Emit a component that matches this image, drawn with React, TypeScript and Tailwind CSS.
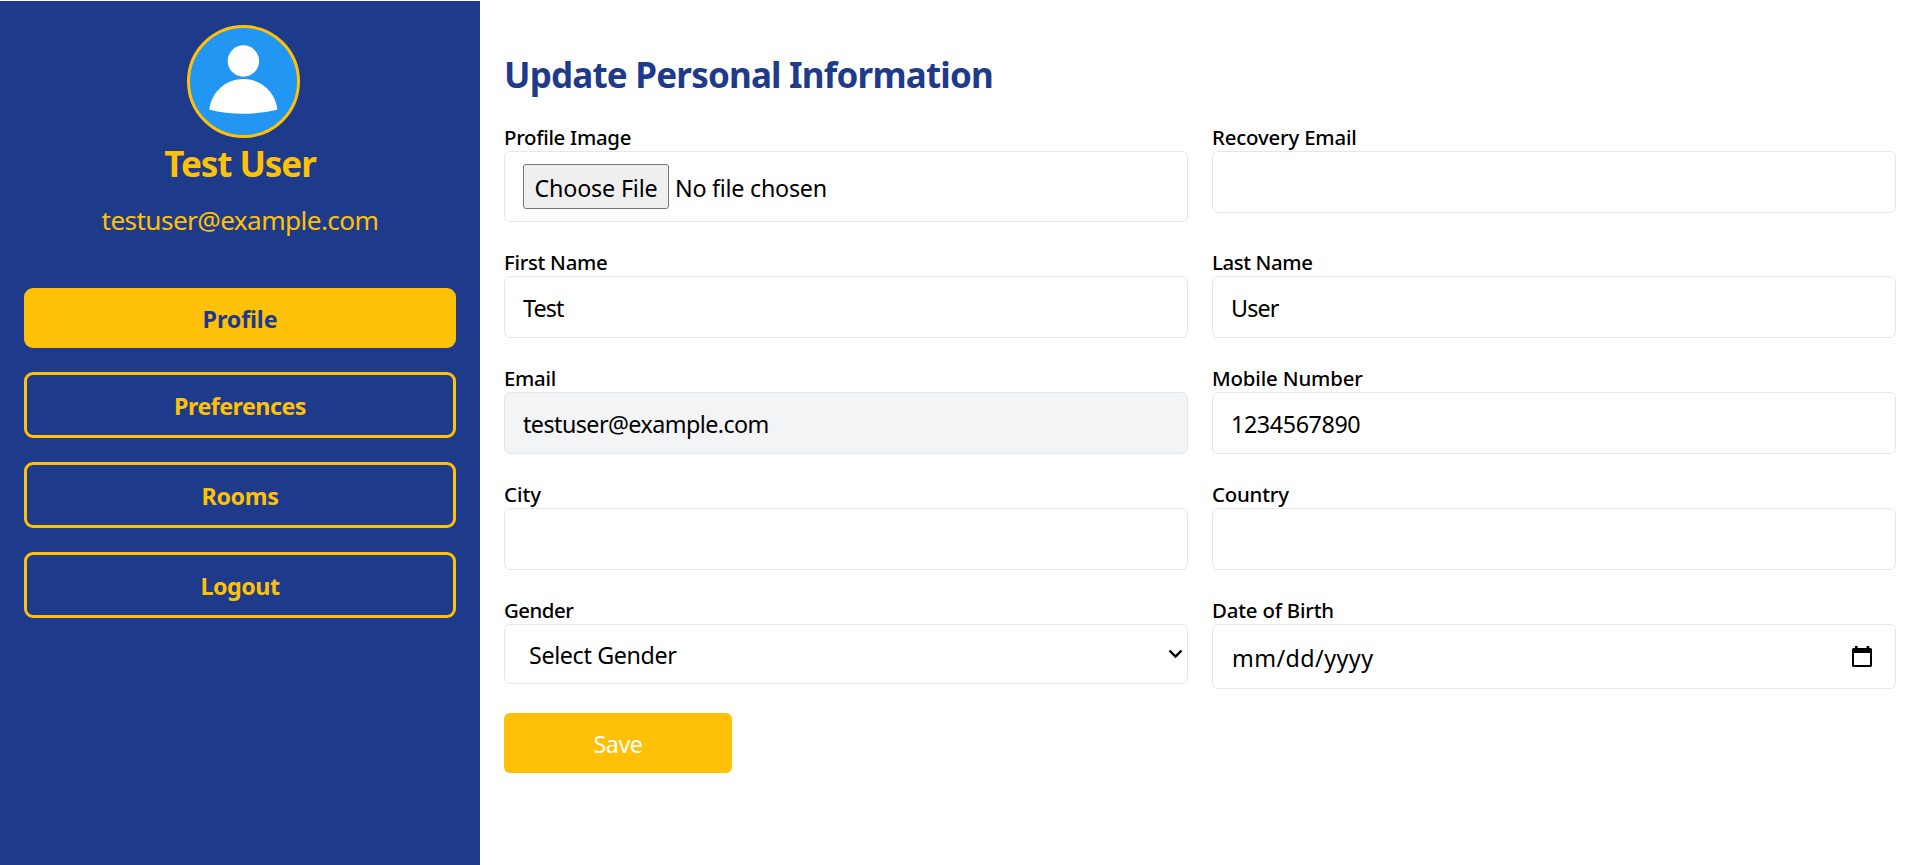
import type { ReactNode } from "react";

const labelBase = "block h-[30px] pt-[2px] text-[20.4px] leading-[28px] font-medium text-black";
const inputBase =
  "block h-[62px] w-full rounded-md border border-gray-200 px-[18px] pt-[2px] text-[23.3px] text-black outline-none";

function Field({ label, spacing, children }: { label: string; spacing: string; children: ReactNode }) {
  return (
    <label className="block">
      <span className={`${labelBase} ${spacing}`}>{label}</span>
      {children}
    </label>
  );
}

function Avatar() {
  return (
    <svg width="113" height="113" viewBox="0 0 113 113" className="ml-[7px] shrink-0" aria-hidden="true">
      <circle cx="56.5" cy="56.5" r="55" fill="#2196f3" stroke="#ffc107" strokeWidth="3" />
      <circle cx="56.4" cy="36" r="15.7" fill="#fff" />
      <path d="M22.3 84.7C24.2 67.2 38.8 54 56.4 54S88.6 67.2 90.4 84.7Q74 88.7 56.4 88.7T22.3 84.7Z" fill="#fff" />
    </svg>
  );
}

function NavButton({ label, spacing, active = false }: { label: string; spacing: string; active?: boolean }) {
  return (
    <button
      type="button"
      className={`flex w-full items-center justify-center rounded-[9px] pt-[2px] text-[23.3px] font-bold ${spacing} ${
        active ? "h-[60px] bg-[#ffc107] text-[#1e3a8a]" : "h-[66px] border-[3px] border-[#ffc107] text-[#ffc107]"
      }`}
    >
      {label}
    </button>
  );
}

function Sidebar() {
  return (
    <aside className="flex w-[480px] shrink-0 flex-col bg-[#1e3a8a] px-6 pt-6">
      <div className="flex flex-col items-center text-[#ffc107]">
        <Avatar />
        <h2 className="mt-[5px] text-[35px] leading-[42px] font-bold tracking-[-1.05px]">Test User</h2>
        <p className="mt-[14px] text-[26.2px] leading-[42px] tracking-[-0.6px]">testuser@example.com</p>
      </div>
      <nav className="mt-[47px] flex flex-col gap-6">
        <NavButton label="Profile" spacing="tracking-[-0.13px]" active />
        <NavButton label="Preferences" spacing="tracking-[-0.55px]" />
        <NavButton label="Rooms" spacing="tracking-[-0.38px]" />
        <NavButton label="Logout" spacing="tracking-[-0.48px]" />
      </nav>
    </aside>
  );
}

export default function App() {
  return (
    <div className="flex h-[865px] overflow-hidden bg-white pt-px font-['Noto_Sans',sans-serif]">
      <Sidebar />
      <main className="flex-1 pt-[47px] pr-[22px] pl-6">
        <h1 className="h-[73px] text-[35px] leading-[54px] font-bold tracking-[-0.8px] text-[#1e3a8a]">
          Update Personal Information
        </h1>
        <form className="grid grid-cols-2 gap-6">
          <Field label="Profile Image" spacing="tracking-[-0.3px]">
            <div className="flex h-[71px] items-center rounded-md border border-gray-200 px-[18px] text-[23.3px] text-black">
              <span className="flex h-[45px] w-[146px] items-center justify-center rounded-[3px] border border-[#767676] bg-[#efefef] pt-[4px] tracking-[-0.17px]">
                Choose File
              </span>
              <span className="ml-[6px] pt-[4px] tracking-[-0.26px]">No file chosen</span>
            </div>
          </Field>
          <Field label="Recovery Email" spacing="tracking-[-0.18px]">
            <input type="email" className={inputBase} />
          </Field>
          <Field label="First Name" spacing="tracking-[-0.3px]">
            <input defaultValue="Test" className={`${inputBase} tracking-[-0.9px]`} />
          </Field>
          <Field label="Last Name" spacing="tracking-[-0.4px]">
            <input defaultValue="User" className={`${inputBase} tracking-[-0.9px]`} />
          </Field>
          <Field label="Email" spacing="tracking-[-0.3px]">
            <input
              defaultValue="testuser@example.com"
              readOnly
              className={`${inputBase} bg-gray-100 tracking-[-0.56px]`}
            />
          </Field>
          <Field label="Mobile Number" spacing="tracking-[-0.16px]">
            <input defaultValue="1234567890" className={`${inputBase} tracking-[-0.4px]`} />
          </Field>
          <Field label="City" spacing="tracking-normal">
            <input className={inputBase} />
          </Field>
          <Field label="Country" spacing="tracking-[-0.2px]">
            <input className={inputBase} />
          </Field>
          <Field label="Gender" spacing="tracking-[-0.48px]">
            <div className="flex h-[60px] items-center justify-between rounded-md border border-gray-200 pr-[4px] pl-6 text-black">
              <span className="pt-[2px] text-[23.3px] tracking-[-0.37px]">Select Gender</span>
              <svg width="15" height="10" viewBox="0 0 15 10" fill="none" aria-hidden="true">
                <path d="M1.5 1.5L7.5 7.5L13.5 1.5" stroke="currentColor" strokeWidth="2.4" />
              </svg>
            </div>
          </Field>
          <Field label="Date of Birth" spacing="tracking-[-0.2px]">
            <div className="flex h-[65px] items-center justify-between rounded-md border border-gray-200 pr-[23px] pl-[19px] text-black">
              <span className="pt-[3px] text-[23.3px] tracking-[0.44px]">mm/dd/yyyy</span>
              <svg width="20" height="21" viewBox="0 0 20 21" aria-hidden="true">
                <path
                  d="M3 0H5.6V2H14.6V0H17.2V2H18.5Q20 2 20 3.6V19.4Q20 21 18.5 21H1.5Q0 21 0 19.4V3.6Q0 2 1.5 2H3ZM2 7V19H18V7Z"
                  fillRule="evenodd"
                  fill="currentColor"
                />
              </svg>
            </div>
          </Field>
          <button
            type="submit"
            className="h-[60px] w-[228px] rounded-md bg-[#ffc107] pt-[2px] text-[23.3px] tracking-[-0.4px] text-white"
          >
            Save
          </button>
        </form>
      </main>
    </div>
  );
}
